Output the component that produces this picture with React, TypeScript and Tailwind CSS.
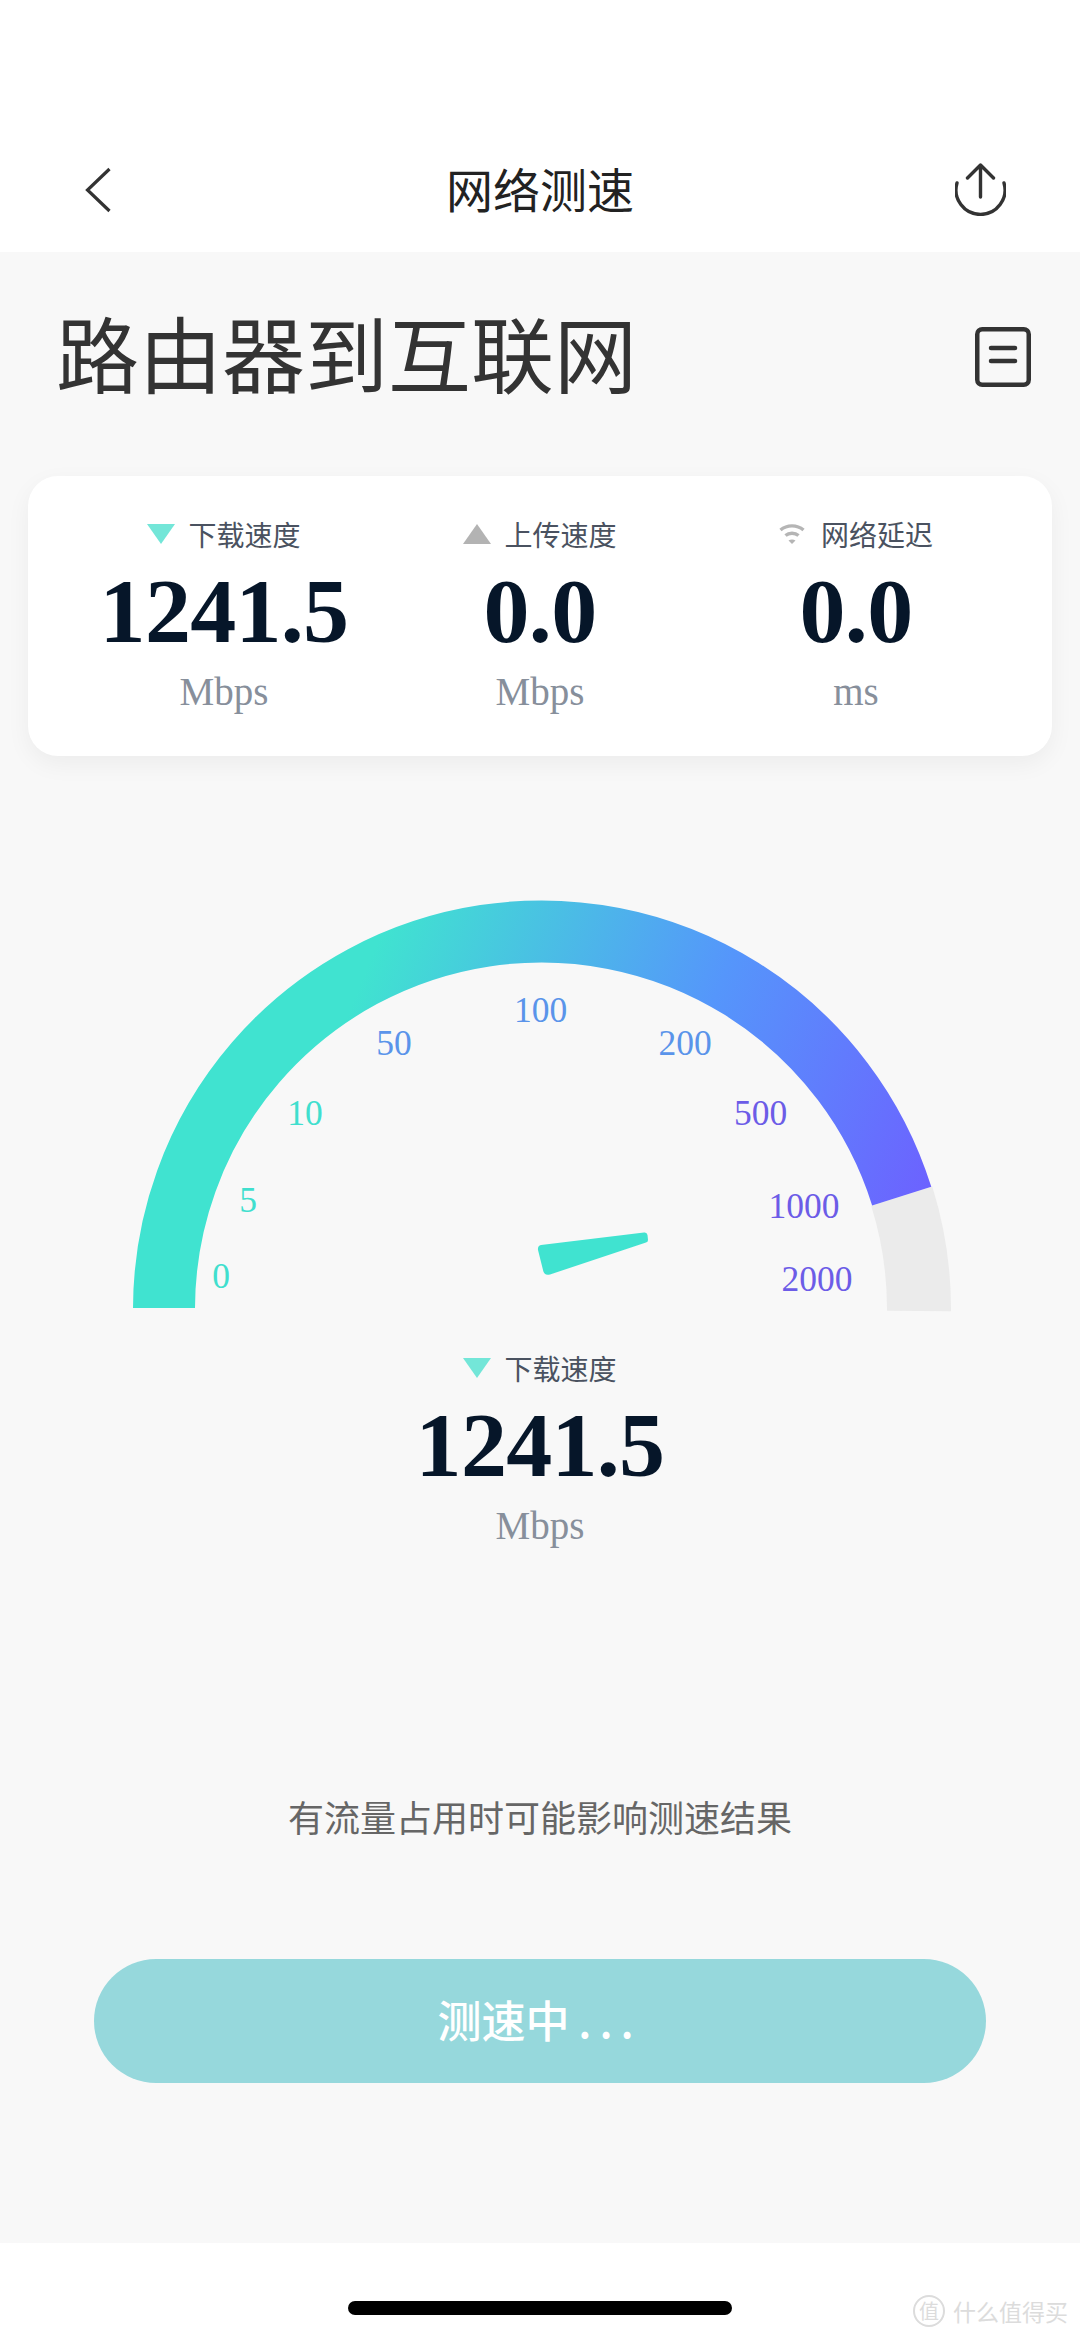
const cjk = "font-['Noto_Sans_CJK_SC','Noto_Sans',sans-serif]";
const serif = "font-['Liberation_Serif','Times_New_Roman',serif]";

function Label({ icon, text }: { icon: React.ReactNode; text: string }) {
  return (
    <div className={`flex items-center justify-center gap-[13px] h-[32px] text-[28px] leading-[32px] text-[#4a5260] ${cjk}`}>
      {icon}
      <span>{text}</span>
    </div>
  );
}

const TriDown = () => (
  <svg width="28" height="20" viewBox="0 0 28 20"><path d="M0 0H28L14 20Z" fill="#73e6d8" /></svg>
);
const TriUp = () => (
  <svg width="28" height="20" viewBox="0 0 28 20"><path d="M0 20H28L14 0Z" fill="#b3b3b3" /></svg>
);
const Wifi = () => (
  <svg width="26" height="22" viewBox="0 0 26 22" fill="none" stroke="#b5b5b5" strokeWidth="3.4" className="mr-[3px]">
    <path d="M1.5 7C8 1.5 18 1.5 24.5 7" />
    <path d="M6.5 12.5C10 9.5 16 9.5 19.5 12.5" />
    <path d="M13 21L9.5 17.5C11.5 16 14.5 16 16.5 17.5Z" fill="#b5b5b5" stroke="none" />
  </svg>
);

function Readout({ icon, label, value, unit }: { icon: React.ReactNode; label: string; value: string; unit: string }) {
  return (
    <div className="flex flex-col items-center">
      <Label icon={icon} text={label} />
      <div className={`mt-[19px] h-[84px] text-[92px] leading-[84px] tracking-[-0.7px] font-bold text-[#061629] ${serif}`}>{value}</div>
      <div className={`mt-[17px] h-[44px] text-[39px] leading-[44px] text-[#878f9b] ${serif}`}>{unit}</div>
    </div>
  );
}

const ticks = [
  { t: "0", x: 221, y: 1276, c: "#40dfce" },
  { t: "5", x: 248, y: 1200, c: "#40dfce" },
  { t: "10", x: 305, y: 1113, c: "#40dfce" },
  { t: "50", x: 394, y: 1043, c: "#5a94ea" },
  { t: "100", x: 540.5, y: 1010, c: "#5a94ea" },
  { t: "200", x: 685, y: 1043, c: "#5a94ea" },
  { t: "500", x: 760.5, y: 1113, c: "#6c5ce7" },
  { t: "1000", x: 804, y: 1206, c: "#6c5ce7" },
  { t: "2000", x: 817, y: 1279, c: "#6c5ce7" },
];

function Gauge() {
  const cx = 541.5;
  const cy = 1309;
  const r = 377.5;
  const a = (17.4 * Math.PI) / 180;
  const ex = cx + r * Math.cos(a);
  const ey = cy - r * Math.sin(a);
  return (
    <svg width="1080" height="440" viewBox="0 880 1080 440" className="block">
      <defs>
        <linearGradient id="arc" gradientUnits="userSpaceOnUse" x1="370" y1="960" x2="930" y2="1190">
          <stop offset="0" stopColor="#40e3d0" />
          <stop offset="0.55" stopColor="#5596fb" />
          <stop offset="1" stopColor="#6c62ff" />
        </linearGradient>
      </defs>
      <path d={`M${ex} ${ey}A${r} ${r} 0 0 1 ${cx + r} 1311`} fill="none" stroke="#ebebeb" strokeWidth="64" />
      <path d={`M${cx - r} 1308A${r} ${r} 0 0 1 ${ex} ${ey}`} fill="none" stroke="url(#arc)" strokeWidth="62" />
      {ticks.map((k) => (
        <text key={k.t} x={k.x} y={k.y + 11.5} textAnchor="middle" fontSize="35.5" fontFamily="'Liberation Serif', serif" fill={k.c}>
          {k.t}
        </text>
      ))}
      <path d="M541 1245L644 1232.5Q647 1232 647.5 1235L648 1240Q648 1242 646 1242.5L550 1274.5Q544 1276 543 1270L538 1250Q537.5 1245.5 541 1245Z" fill="#40e3d0" />
    </svg>
  );
}

export default function App() {
  return (
    <div className={`w-[1080px] h-[2337px] flex flex-col bg-white overflow-hidden ${cjk}`}>
      <header className="h-[252px] pt-[159px] px-[74px] flex items-start justify-between bg-white">
        <svg width="51" height="62" viewBox="0 0 51 62" fill="none" stroke="#333" strokeWidth="3.2">
          <path d="M35.5 10L13.5 31L35.5 52" strokeLinejoin="miter" />
        </svg>
        <div className="-mt-[2px] h-[62px] text-[47px] leading-[62px] text-[#222]">网络测速</div>
        <svg width="51" height="53" viewBox="0 0 51 53" fill="none" stroke="#333" strokeWidth="3.4" strokeLinecap="round" className="mt-[4px]">
          <path d="M2 20A24.5 24.5 0 1 0 49 20" />
          <path d="M25.5 34V2M12.5 15L25.5 2L38.5 15" strokeLinejoin="round" />
        </svg>
      </header>

      <main className="flex-1 bg-[#f8f8f8] flex flex-col">
        <div className="h-[224px] pl-[56px] pr-[49px] flex items-start justify-between">
          <h1 className="mt-[49px] h-[100px] text-[83px] leading-[100px] font-normal text-[#333]">路由器到互联网</h1>
          <svg width="56" height="60" viewBox="0 0 56 60" fill="none" stroke="#333" className="mt-[75px]">
            <rect x="2.25" y="2.25" width="51.5" height="55.5" rx="5" strokeWidth="4.5" />
            <path d="M16 21H40M16 34H40" strokeWidth="4.5" strokeLinecap="round" />
          </svg>
        </div>

        <section className="mx-[28px] h-[280px] rounded-[30px] bg-white shadow-[0_8px_24px_rgba(0,0,0,0.05)] px-[38px] pt-[42px] grid grid-cols-3">
          <Readout icon={<TriDown />} label="下载速度" value="1241.5" unit="Mbps" />
          <Readout icon={<TriUp />} label="上传速度" value="0.0" unit="Mbps" />
          <Readout icon={<Wifi />} label="网络延迟" value="0.0" unit="ms" />
        </section>

        <div className="mt-[124px]">
          <Gauge />
        </div>

        <div className="mt-[32px]">
          <Readout icon={<TriDown />} label="下载速度" value="1241.5" unit="Mbps" />
        </div>

        <p className="mt-[246px] h-[44px] text-center text-[36px] leading-[44px] text-[#666]">有流量占用时可能影响测速结果</p>

        <div className="mt-[121px] mx-[94px] h-[124px] rounded-[62px] bg-[#96d8dc] flex items-center justify-center pr-[10px] pb-[5px] text-[44px] font-medium text-white">
          <span>测速中<span className="tracking-[-1px]"> . . .</span></span>
        </div>
      </main>

      <footer className="h-[94px] relative bg-white flex justify-center">
        <div className="mt-[58px] w-[384px] h-[14px] rounded-[7px] bg-black" />
        <div className="absolute left-[913px] top-[52px] flex items-center gap-[8px] text-[#dcdcdc]">
          <span className="w-[32px] h-[32px] rounded-full border-[2px] border-[#dcdcdc] flex items-center justify-center text-[20px] leading-none">值</span>
          <span className="text-[23px] leading-[30px]">什么值得买</span>
        </div>
      </footer>
    </div>
  );
}
